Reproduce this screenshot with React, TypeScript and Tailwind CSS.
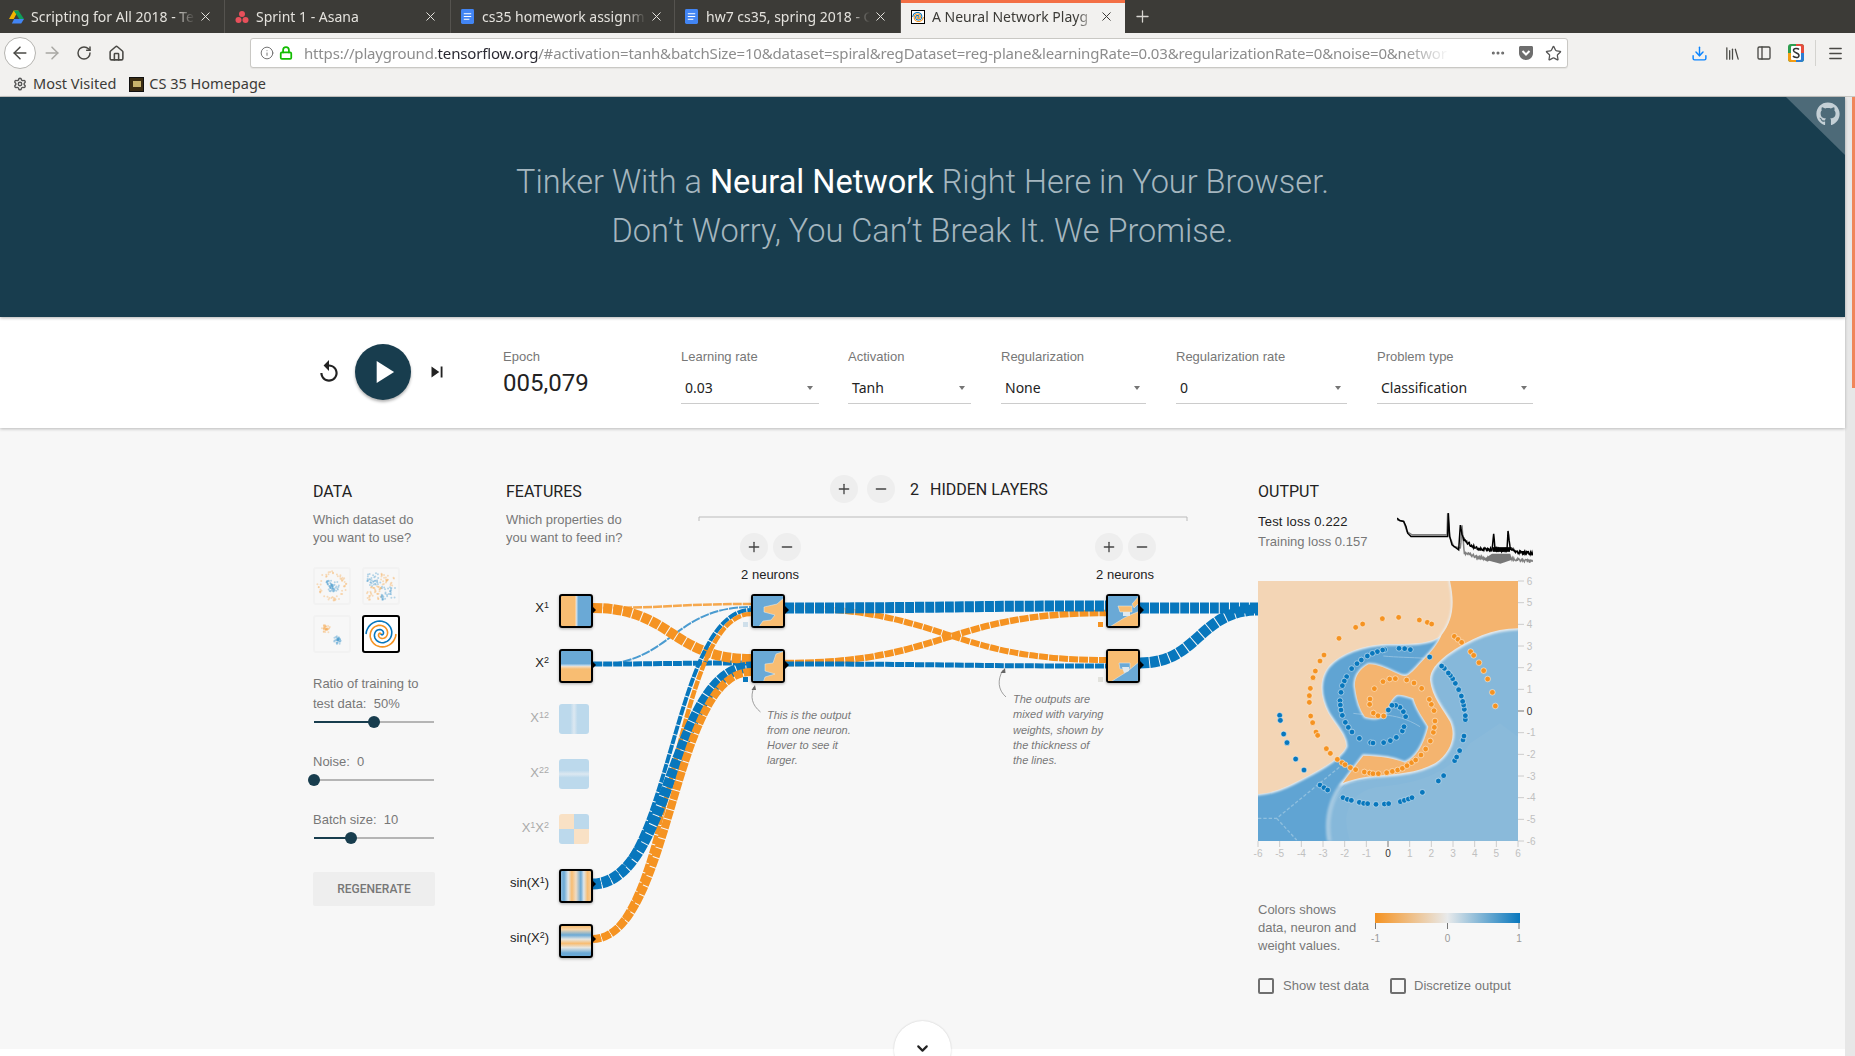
import { ArrowLeft, ArrowRight, ChevronDown, Download, Home, Info, Library, Lock, Menu, Minus, MoreHorizontal, PanelLeft, Plus, RotateCw, Settings, Star, X } from "lucide-react";
import { FaGithub } from "react-icons/fa";
import { MdPlayArrow, MdReplay, MdSkipNext } from "react-icons/md";
import type { ReactNode } from "react";

const BLUE = "#0877bd";
const ORANGE = "#f59322";

// points read off the output plot, in 3x zoom coordinates
const bluePts = [[119,436],[121,451],[131,492],[141,518],[167,567],[192,600],[240,645],[252,653],[263,660],[309,683],[322,688],[334,691],[358,697],[371,700],[383,701],[408,703],[433,702],[446,701],[481,695],[493,691],[505,687],[516,683],[547,667],[595,633],[611,617],[644,572],[650,561],[659,542],[669,510],[672,498],[676,449],[676,437],[673,418],[671,405],[668,394],[664,378],[656,359],[646,340],[638,326],[631,316],[625,309],[613,295],[605,288],[569,261],[511,239],[494,236],[477,235],[434,239],[428,240],[412,245],[397,250],[382,258],[364,270],[351,281],[335,296],[320,320],[313,333],[307,347],[303,367],[300,392],[301,405],[303,420],[307,436],[316,457],[325,472],[336,486],[358,505],[392,518],[399,519],[431,518],[451,512],[469,502],[487,483],[492,470],[497,440],[490,425],[480,412],[467,406],[456,406],[445,420]];
const orangePts = [[427,146],[476,142],[538,150],[562,157],[575,162],[368,162],[347,172],[297,205],[252,255],[240,273],[226,303],[219,323],[211,355],[208,377],[208,397],[212,438],[218,458],[228,486],[233,496],[259,536],[271,550],[292,568],[306,578],[315,584],[331,593],[347,599],[373,606],[389,609],[399,611],[415,611],[440,608],[457,604],[473,600],[487,595],[501,587],[515,578],[527,570],[543,555],[557,537],[571,513],[580,487],[583,472],[585,453],[582,422],[574,403],[568,388],[545,355],[522,339],[500,330],[466,326],[449,327],[429,335],[403,356],[390,387],[389,403],[400,429],[414,437],[431,438],[643,199],[654,208],[665,217],[692,245],[701,256],[717,278],[731,302],[743,327],[757,367],[766,408]];

function seeded(seed: number) {
  let s = seed;
  return () => {
    s = (s * 16807) % 2147483647;
    return s / 2147483647;
  };
}

function Thumb({ kind, active }: { kind: string; active?: boolean }) {
  const r = seeded(kind.length * 977 + 13);
  const dots: { x: number; y: number; c: string }[] = [];
  if (kind === "circle") {
    for (let i = 0; i < 110; i++) {
      const a = r() * 6.28;
      const d = i % 2 ? r() * 7 : 11 + r() * 4;
      dots.push({ x: 17 + Math.cos(a) * d, y: 17 + Math.sin(a) * d, c: i % 2 ? BLUE : ORANGE });
    }
  } else if (kind === "xor") {
    for (let i = 0; i < 130; i++) {
      const x = 3 + r() * 28;
      const y = 3 + r() * 28;
      dots.push({ x, y, c: (x - 17) * (y - 17) > 0 ? BLUE : ORANGE });
    }
  } else {
    for (let i = 0; i < 70; i++) {
      const a = r() * 6.28;
      const d = r() * 4.5;
      const o = i % 2 === 0;
      dots.push({ x: (o ? 11 : 23) + Math.cos(a) * d, y: (o ? 12 : 23) + Math.sin(a) * d, c: o ? ORANGE : BLUE });
    }
  }
  return (
    <div className={active ? "w-[38px] h-[38px] bg-white border-2 border-black rounded-[3px]" : "w-[38px] h-[38px] border-2 border-[#f0f0f0] rounded-[3px] opacity-70"}>
      <svg viewBox="0 0 34 34" className="w-full h-full">
        {kind === "spiral" ? (
          <>
            <path d={spiralPath(0)} fill="none" stroke={BLUE} strokeWidth="1.6" />
            <path d={spiralPath(Math.PI)} fill="none" stroke={ORANGE} strokeWidth="1.6" />
          </>
        ) : (
          dots.map((d, i) => <circle key={i} cx={d.x} cy={d.y} r="1" fill={d.c} opacity="0.4" />)
        )}
      </svg>
    </div>
  );
}

function spiralPath(delta: number) {
  let d = "";
  for (let i = 0; i <= 60; i++) {
    const t = (i / 60) * 1.75 * 2 * Math.PI + delta;
    const rad = (i / 60) * 15;
    d += `${i ? "L" : "M"}${(17 + rad * Math.sin(t)).toFixed(1)} ${(17 + rad * Math.cos(t)).toFixed(1)}`;
  }
  return d;
}

function Tab({ icon, title, width, active }: { icon: ReactNode; title: string; width: string; active?: boolean }) {
  return (
    <div className={`flex items-center pl-[9px] h-[33px] ${width} ${active ? "bg-[#f2f1ef] border-t-[3px] border-[#f36f45] pb-[3px] text-[#3c3b37]" : "border-r border-[#55534f] text-[#e4e2dd]"}`}>
      <div className="w-[15px] h-[15px] shrink-0 flex items-center justify-center">{icon}</div>
      <div className="ml-[7px] w-[164px] overflow-hidden whitespace-nowrap text-[14px] [mask-image:linear-gradient(90deg,#000_88%,transparent)]">{title}</div>
      <X size={15} strokeWidth={1.6} className="ml-[3px] shrink-0" />
    </div>
  );
}

function DocIcon() {
  return (
    <svg viewBox="0 0 14 16" className="w-[13px] h-[15px]">
      <rect width="14" height="16" rx="1.5" fill="#4285f4" />
      <path d="M3 5h8M3 8h8M3 11h6" stroke="#fff" strokeWidth="1.1" />
    </svg>
  );
}

function SelectBox({ label, value, width, gap }: { label: string; value: string; width: string; gap: string }) {
  return (
    <div className={`flex flex-col ${width} ${gap}`}>
      <div className="text-[13px] leading-4 text-[#777]">{label}</div>
      <div className="mt-[1px] h-[38px] border-b border-[#ccc] flex items-end justify-between pl-1 pr-[6px] pb-[6px] text-[14px] leading-[19px] text-[#222] [font-family:'Noto_Sans',sans-serif]">
        <span>{value}</span>
        <span className="mb-[7px] w-0 h-0 border-x-[3.5px] border-x-transparent border-t-[4px] border-t-[#757575]" />
      </div>
    </div>
  );
}

function Slider({ pct, fill }: { pct: string; fill: string }) {
  return (
    <div className="relative h-3 w-[120px] ml-px flex items-center">
      <div className="h-[2px] w-full bg-[#b5b5b5]" />
      <div className={`absolute left-0 h-[2px] bg-[#183d4e] ${fill}`} />
      <div className={`absolute w-3 h-3 rounded-full bg-[#183d4e] -ml-[6px] ${pct}`} />
    </div>
  );
}

function RoundButton({ children, className }: { children: ReactNode; className: string }) {
  return <div className={`absolute w-7 h-7 rounded-full bg-[#eeeeee] flex items-center justify-center text-[#444] ${className}`}>{children}</div>;
}

const features = [
  { key: "x1", top: "top-[166px]", on: true, label: <>X<sup className="text-[9px]">1</sup></>, bg: "bg-[linear-gradient(90deg,#f8bd72_0_46%,#f5dcc0_50%,#c6dcec_52%,#6aa9d6_58%)]" },
  { key: "x2", top: "top-[221px]", on: true, label: <>X<sup className="text-[9px]">2</sup></>, bg: "bg-[linear-gradient(180deg,#6aa9d6_0_42%,#c6dcec_49%,#f5dcc0_52%,#f8bd72_60%)]" },
  { key: "x12", top: "top-[276px]", on: false, label: <>X<sup className="text-[9px]">12</sup></>, bg: "bg-[linear-gradient(90deg,#bcd9ec_0_38%,#dce8f1_50%,#bcd9ec_62%)]" },
  { key: "x22", top: "top-[331px]", on: false, label: <>X<sup className="text-[9px]">22</sup></>, bg: "bg-[linear-gradient(180deg,#bcd9ec_0_38%,#dce8f1_50%,#bcd9ec_62%)]" },
  { key: "x1x2", top: "top-[386px]", on: false, label: <>X<sup className="text-[9px]">1</sup>X<sup className="text-[9px]">2</sup></>, bg: "bg-[conic-gradient(#bcd9ec_0_90deg,#f9e1c5_90deg_180deg,#bcd9ec_180deg_270deg,#f9e1c5_270deg)]" },
  { key: "sin1", top: "top-[441px]", on: true, label: <>sin(X<sup className="text-[9px]">1</sup>)</>, bg: "bg-[linear-gradient(90deg,#8fbbdc_0,#6aa9d6_10%,#dfe6ea_24%,#f8bd72_36%,#f0dcc4_50%,#6aa9d6_66%,#dfe6ea_76%,#f8bd72_88%,#f6cd98_100%)]" },
  { key: "sin2", top: "top-[496px]", on: true, label: <>sin(X<sup className="text-[9px]">2</sup>)</>, bg: "bg-[linear-gradient(180deg,#f8bd72_0,#f6d6ac_12%,#6aa9d6_30%,#e6e6e2_44%,#f8bd72_58%,#e6e6e2_72%,#6aa9d6_90%,#6aa9d6_100%)]" },
];

function Neuron({ pos, bg, blue, orange, glow }: { pos: string; bg: string; blue?: string; orange?: string; glow?: string }) {
  return (
    <div className={`absolute w-[34px] h-[34px] border-2 border-black rounded-[3px] overflow-hidden shadow-[0_1px_3px_rgba(0,0,0,.3)] ${pos}`}>
      <svg viewBox="0 0 34 34" className="block w-full h-full -m-[2px] min-w-[34px] min-h-[34px]">
        <rect width="34" height="34" fill={bg} />
        {blue && <path d={blue} fill="#6aa9d6" stroke="#dbe7ef" strokeWidth="0.6" />}
        {orange && <path d={orange} fill="#f8bd72" stroke="#eef0ee" strokeWidth="0.5" />}
        {glow && <path d={glow} fill="#dfe9f0" />}
      </svg>
    </div>
  );
}

function Link({ d, w, c, o }: { d: string; w: number; c: string; o?: number }) {
  return <path d={d} fill="none" stroke={c} strokeWidth={w} strokeDasharray="9 1" opacity={o ?? 1} />;
}

function Curve(x1: number, y1: number, x2: number, y2: number) {
  const m = (x1 + x2) / 2;
  return `M${x1} ${y1}C${m} ${y1} ${m} ${y2} ${x2} ${y2}`;
}

function Network() {
  return (
    <svg viewBox="507 428 751 621" className="absolute inset-0 w-[751px] h-[621px] pointer-events-none">
      <path d="M699 521V517H1187V521" fill="none" stroke="#bbb" strokeWidth="1" />
      <Link d={Curve(593, 608, 751, 604)} w={2.5} c={ORANGE} o={0.8} />
      <Link d={Curve(593, 665, 751, 607)} w={2} c="#4a9bd0" />
      <Link d={Curve(593, 664, 751, 663)} w={5} c={BLUE} />
      <Link d={Curve(593, 608, 751, 659)} w={10} c={ORANGE} />
      <Link d={Curve(592, 884, 751, 610)} w={4} c={BLUE} />
      <Link d={Curve(592, 939, 751, 614)} w={4.5} c={ORANGE} />
      <Link d={Curve(592, 884, 751, 667)} w={11} c={BLUE} />
      <Link d={Curve(592, 939, 751, 672)} w={8} c={ORANGE} />
      <Link d={Curve(785, 608, 1106, 660)} w={6} c={ORANGE} />
      <Link d={Curve(785, 663, 1106, 613)} w={6.5} c={ORANGE} />
      <Link d={Curve(785, 664, 1106, 666)} w={5} c={BLUE} />
      <Link d={Curve(785, 608, 1106, 606)} w={11} c={BLUE} />
      <Link d={Curve(1140, 608, 1258, 608)} w={11} c={BLUE} />
      <Link d={Curve(1140, 663, 1258, 610)} w={11} c={BLUE} />
      {[[593, 610], [593, 665], [593, 884], [593, 939], [786, 610], [786, 665], [1141, 610], [1141, 665]].map(([x, y]) => (
        <path key={`${x}-${y}`} d={`M${x - 1} ${y - 4}L${x + 3} ${y}L${x - 1} ${y + 4}Z`} fill="#000" />
      ))}
      <rect x="743" y="622" width="5" height="5" fill="#cfdfea" />
      <rect x="743" y="677" width="5" height="5" fill={BLUE} />
      <rect x="1098" y="622" width="5" height="5" fill={ORANGE} />
      <rect x="1098" y="677" width="5" height="5" fill="#e2e2dd" />
      <path d="M760.5 712C752 705 750 697 754 687" fill="none" stroke="#888" strokeWidth="0.8" />
      <path d="M751.5 690L755 685L756 690Z" fill="#666" />
      <path d="M1006 697C998 690 997 680 1003 670" fill="none" stroke="#888" strokeWidth="0.8" />
      <path d="M1000.5 673L1005 668L1005.5 673Z" fill="#666" />
    </svg>
  );
}

function lossLine(points: number[][], amp: number, from: number) {
  const r = seeded(amp * 1000 + 7);
  let d = "";
  for (let i = 0; i < points.length - 1; i++) {
    const [x1, y1] = points[i];
    const [x2, y2] = points[i + 1];
    const steps = x1 >= from ? Math.max(1, Math.floor((x2 - x1) / 1.5)) : 1;
    for (let s = 0; s < steps; s++) {
      const t = s / steps;
      const n = x1 >= from ? (r() - 0.5) * amp : 0;
      d += `${d ? "L" : "M"}${(x1 + (x2 - x1) * t).toFixed(1)} ${(y1 + (y2 - y1) * t + n).toFixed(1)}`;
    }
  }
  return d + `L${points[points.length - 1].join(" ")}`;
}

function LossChart() {
  const test = [[470,145],[478,152],[490,155],[497,170],[502,190],[512,200],[622,200],[624,130],[628,200],[635,225],[655,240],[660,170],[668,205],[690,225],[720,238],[755,240],[760,195],[765,240],[800,240],[803,185],[810,235],[830,248],[878,250]];
  const train = [[470,150],[490,155],[500,185],[515,195],[620,195],[622,130],[628,200],[640,230],[660,238],[665,170],[672,250],[690,255],[720,265],[750,270],[810,265],[840,272],[878,275]];
  return (
    <svg viewBox="470 130 408 155" className="w-[136px] h-[52px] shrink-0">
      <path d={lossLine(train, 9, 660)} fill="none" stroke="#808080" strokeWidth="4.5" />
      <path d="M730 268L755 252H810L815 270L780 282Z" fill="#777" />
      <path d={lossLine(test, 10, 660)} fill="none" stroke="#000" strokeWidth="4.5" />
      <rect x="757" y="232" width="52" height="14" fill="#000" />
    </svg>
  );
}

function Heatmap() {
  const ticks = [-6, -5, -4, -3, -2, -1, 0, 1, 2, 3, 4, 5, 6];
  const lightEdge = "M54 33H630C645 100 640 150 605 195C570 225 500 222 440 222C370 225 300 250 265 290C235 330 240 380 265 430C290 470 320 500 318 530C300 570 220 610 160 640C110 665 80 670 54 672Z";
  const orangeEdge = "M630 33H834V175C760 175 690 205 620 255C590 280 570 300 570 330C575 380 610 420 630 455C650 500 630 550 585 580C530 610 470 612 400 618C360 622 330 630 308 640C325 615 345 590 370 557C420 558 465 565 495 578C525 565 550 530 565 470C550 445 530 420 520 385C500 378 480 372 470 375C455 385 450 400 445 410C440 430 430 442 410 444C395 446 385 442 375 440C360 420 350 390 345 350C343 325 355 300 385 283C405 280 440 295 470 310C485 318 495 320 505 315C525 300 535 285 550 270C575 245 595 220 605 195C640 150 645 100 630 33Z";
  return (
    <svg width="260" height="260" viewBox="54 33 780 780" className="block overflow-visible shrink-0">
      <defs>
        <clipPath id="plot"><rect x="54" y="33" width="780" height="780" /></clipPath>
        <filter id="soft" x="-5%" y="-5%" width="110%" height="110%"><feGaussianBlur stdDeviation="2.5" /></filter>
      </defs>
      <g clipPath="url(#plot)">
        <rect x="54" y="33" width="780" height="780" fill="#86b8da" />
        <path d="M330 813C300 730 330 660 420 650C520 640 620 620 690 520L780 460L834 500V813Z" fill="#8abada" />
        <path d="M54 33H640V175L600 265L570 320L590 390L640 470L630 530L580 580L500 610L400 625L320 640C270 690 258 750 268 813H54Z" fill="#60a4d3" />
        <path d="M834 175C760 175 690 205 620 255C590 280 570 300 570 330C575 380 610 420 630 455C650 500 630 550 585 580C530 610 470 612 400 618C360 622 330 630 308 640C270 690 258 750 268 813" fill="none" stroke="#a4c9e2" strokeWidth="14" filter="url(#soft)" />
        <path d="M54 745H110L300 590M110 745L170 810" fill="none" stroke="#8fbfde" strokeWidth="4" strokeDasharray="10 6" />
        <path d="M340 430C400 440 460 420 540 470" fill="none" stroke="#8fbfe0" strokeWidth="3" />
        <path d="M430 258C470 262 510 262 560 265" fill="none" stroke="#8fbfe0" strokeWidth="3" />
        <path d={lightEdge} fill="#f3d5b5" stroke="#eef1f2" strokeWidth="9" filter="url(#soft)" />
        <path d={lightEdge} fill="#f3d5b5" />
        <path d={orangeEdge} fill="#f4b46f" stroke="#e9eff3" strokeWidth="8" filter="url(#soft)" />
        <path d={orangeEdge} fill="#f4b46f" />
        {bluePts.map(([x, y], i) => <circle key={i} cx={x} cy={y} r="8.5" fill={BLUE} stroke="#fff" strokeOpacity="0.75" strokeWidth="2" />)}
        {orangePts.map(([x, y], i) => <circle key={i} cx={x} cy={y} r="8.5" fill={ORANGE} stroke="#fff" strokeOpacity="0.75" strokeWidth="2" />)}
      </g>
      {ticks.map((t) => {
        const x = 54 + (t + 6) * 65;
        const y = 813 - (t + 6) * 65;
        const c = t === 0 ? "#333" : "#c0c0c0";
        return (
          <g key={t} fontSize="30" fill={c}>
            <path d={`M834 ${y}H852M${x} 813V831`} stroke={t === 0 ? "#777" : "#ccc"} strokeWidth="3" fill="none" />
            <text x="860" y={y + 11}>{t}</text>
            <text x={x} y="860" textAnchor="middle">{t}</text>
          </g>
        );
      })}
    </svg>
  );
}

function Legend() {
  return (
    <svg width="150" height="44" className="block overflow-visible shrink-0">
      <defs>
        <linearGradient id="scale">
          <stop offset="0" stopColor={ORANGE} />
          <stop offset="0.5" stopColor="#e8eaeb" />
          <stop offset="1" stopColor={BLUE} />
        </linearGradient>
      </defs>
      <rect x="0" y="12" width="145" height="10" fill="url(#scale)" />
      {[0.5, 72.5, 144].map((x, i) => (
        <g key={x} fill="#999" fontSize="10">
          <path d={`M${x} 22V28`} stroke="#777" />
          <text x={x} y="41" textAnchor="middle">{[-1, 0, 1][i]}</text>
        </g>
      ))}
    </svg>
  );
}

export default function App() {
  return (
    <div className="h-screen w-full overflow-hidden flex flex-col bg-white [font-family:'Liberation_Sans',Arial,sans-serif]">
      <div className="h-[33px] bg-[#3c3b37] flex shrink-0 [font-family:'Noto_Sans',sans-serif]">
        <Tab width="w-[225px]" title="Scripting for All 2018 - Te" icon={
          <svg viewBox="0 0 16 14" className="w-[15px] h-[14px]"><path d="M5 0h5L5 9H0z" fill="#f4b400" /><path d="M10 0l6 9h-5L5 0z" fill="#0f9d58" /><path d="M3 14l2.500-5H16l-3 5z" fill="#4285f4" /></svg>
        } />
        <Tab width="w-[226px]" title="Sprint 1 - Asana" icon={
          <svg viewBox="0 0 14 14" className="w-[14px] h-[14px]"><circle cx="7" cy="4" r="3" fill="#e8505b" /><circle cx="3.500" cy="10" r="3" fill="#e8505b" /><circle cx="10.500" cy="10" r="3" fill="#e8505b" /></svg>
        } />
        <Tab width="w-[224px]" title="cs35 homework assignm" icon={<DocIcon />} />
        <Tab width="w-[226px]" title="hw7 cs35, spring 2018 - G" icon={<DocIcon />} />
        <Tab width="w-[224px]" active title="A Neural Network Playg" icon={
          <div className="w-[14px] h-[14px] border border-black bg-white flex items-center justify-center"><svg viewBox="0 0 34 34" className="w-3 h-3"><path d={spiralPath(0)} fill="none" stroke={BLUE} strokeWidth="3" /><path d={spiralPath(Math.PI)} fill="none" stroke={ORANGE} strokeWidth="3" /></svg></div>
        } />
        <div className="w-[34px] flex items-center justify-center text-[#d8d6d1]"><Plus size={19} strokeWidth={1.6} /></div>
      </div>

      <div className="h-[39px] shrink-0 bg-[#f2f1ef] flex items-center pl-1 pt-[1px] text-[#4a4945]">
        <div className="w-8 h-8 rounded-full border border-[#b5b4b0] bg-white flex items-center justify-center"><ArrowLeft size={20} strokeWidth={1.8} /></div>
        <div className="w-8 h-8 flex items-center justify-center text-[#a8a7a3]"><ArrowRight size={20} strokeWidth={1.8} /></div>
        <div className="w-8 h-8 flex items-center justify-center"><RotateCw size={16} strokeWidth={2.2} /></div>
        <div className="w-8 h-8 flex items-center justify-center"><Home size={17} strokeWidth={2.2} /></div>
        <div className="ml-[118px] w-[1318px] h-[30px] bg-white border border-[#c9c8c4] rounded-[3px] flex items-center pl-[9px] pr-[5px] shadow-[0_1px_1px_rgba(0,0,0,.06)]">
          <Info size={14} strokeWidth={1.6} className="text-[#6a6a6a] shrink-0" />
          <Lock size={14} strokeWidth={3} className="ml-[5px] text-[#12bc00] shrink-0" />
          <div className="ml-[11px] w-[1146px] overflow-hidden whitespace-nowrap text-[15px] tracking-[-0.17px] text-[#8d8d8d] [font-family:'Noto_Sans',sans-serif] [mask-image:linear-gradient(90deg,#000_96%,transparent)]">
            https://playground.<span className="text-[#2b2a33]">tensorflow.org</span>/#activation=tanh&amp;batchSize=10&amp;dataset=spiral&amp;regDataset=reg-plane&amp;learningRate=0.03&amp;regularizationRate=0&amp;noise=0&amp;networ
          </div>
          <MoreHorizontal size={16} strokeWidth={2.6} className="ml-auto text-[#6a6a6a] shrink-0" />
          <svg viewBox="0 0 16 16" className="ml-[12px] w-4 h-4 shrink-0"><path d="M1 2.500C1 1.500 1.800 1 2.500 1h11c.8 0 1.500.5 1.500 1.500V8c0 4-3 7-7 7s-7-3-7-7z" fill="#6e6e6e" /><path d="M4.500 6L8 9.500 11.500 6" fill="none" stroke="#fff" strokeWidth="2" /></svg>
          <Star size={17} strokeWidth={1.8} className="ml-[11px] text-[#555] shrink-0" />
        </div>
        <div className="ml-[115px] w-8 h-8 flex items-center justify-center text-[#0a84ff]"><Download size={17} strokeWidth={2} /></div>
        <div className="ml-px w-8 h-8 flex items-center justify-center"><Library size={17} strokeWidth={1.8} /></div>
        <div className="w-8 h-8 flex items-center justify-center"><PanelLeft size={16} strokeWidth={2} /></div>
        <div className="w-8 h-8 flex items-center justify-center">
          <svg viewBox="0 0 16 18" className="w-4 h-[18px]"><rect width="16" height="18" rx="3" fill="#2e9e4f" /><path d="M0 9h8v9H3a3 3 0 0 1-3-3z" fill="#f39c12" /><path d="M8 0h5a3 3 0 0 1 3 3v6H8z" fill="#e74c3c" /><path d="M8 9h8v6a3 3 0 0 1-3 3H8z" fill="#2d7dd2" /><rect x="3" y="2" width="10" height="14" rx="1" fill="#fff" /><path d="M11 5.500C10 4.300 5.500 4 5.500 6.500S11 8.500 11 11.500 6 13.500 5 12" fill="none" stroke="#333" strokeWidth="1.500" /></svg>
        </div>
        <div className="ml-[3px] w-px h-[26px] bg-[#d4d3cf]" />
        <div className="w-8 ml-[3px] h-8 flex items-center justify-center"><Menu size={17} strokeWidth={2} /></div>
      </div>

      <div className="h-[25px] shrink-0 bg-[#f2f1ef] border-b border-[#c8c7c3] flex items-center pl-[13px] text-[14.500px] text-[#3c3b37] [font-family:'Noto_Sans',sans-serif]">
        <Settings size={14} strokeWidth={2.4} className="text-[#555]" />
        <span className="ml-[6px]">Most Visited</span>
        <div className="ml-[13px] w-[15px] h-[15px] bg-[#3b2c12] border border-[#111] flex items-center justify-center"><div className="w-2 h-[6px] bg-[#c9b36b]" /></div>
        <span className="ml-[5px]">CS 35 Homepage</span>
      </div>

      <div className="flex-1 min-h-0 flex">
        <div className="flex-1 min-w-0 flex flex-col">
          <div className="relative h-[220px] shrink-0 bg-[#183d4e] flex flex-col items-center justify-center text-[32.500px] leading-[49px] font-light text-[#a5b6bf] [font-family:Roboto,sans-serif] shadow-[0_1px_3px_rgba(0,0,0,.3)] z-20">
            <div>Tinker With a <span className="font-normal text-white">Neural Network</span> Right Here in Your Browser.</div>
            <div>Don’t Worry, You Can’t Break It. We Promise.</div>
            <div className="absolute top-0 right-0 w-[59px] h-[58px] bg-[#4d6a78] [clip-path:polygon(0_0,100%_0,100%_100%)]" />
            <FaGithub size={24} className="absolute top-[5px] right-[5px] text-[#c5d0d6]" />
          </div>

          <div className="relative z-10 h-[111px] shrink-0 bg-white flex pl-[317px] shadow-[0_1px_3px_rgba(0,0,0,.25)]">
            <div className="flex items-center h-[110px] -ml-px">
              <MdReplay size={26} className="text-[#222]" />
              <div className="ml-[13px] w-[56px] h-[56px] rounded-full bg-[#183d4e] flex items-center justify-center shadow-[0_2px_3px_rgba(0,0,0,.3)]"><MdPlayArrow size={38} className="text-white" /></div>
              <MdSkipNext size={22} className="ml-[15px] text-[#222]" />
            </div>
            <div className="ml-[55px] w-[178px] pt-[32px]">
              <div className="text-[13px] leading-4 text-[#777]">Epoch</div>
              <div className="mt-[3px] text-[24px] leading-[30px] text-[#222] [font-family:Roboto,sans-serif]">005,079</div>
            </div>
            <div className="flex pt-[32px]">
              <SelectBox label="Learning rate" value="0.03" width="w-[138px]" gap="" />
              <SelectBox label="Activation" value="Tanh" width="w-[123px]" gap="ml-[29px]" />
              <SelectBox label="Regularization" value="None" width="w-[145px]" gap="ml-[30px]" />
              <SelectBox label="Regularization rate" value="0" width="w-[171px]" gap="ml-[30px]" />
              <SelectBox label="Problem type" value="Classification" width="w-[156px]" gap="ml-[30px]" />
            </div>
          </div>

          <div className="relative h-[621px] shrink-0 bg-[#f7f7f7] flex pl-[313px] pt-[54px]">
            <div className="w-[194px] text-[13px] text-[#777]">
              <div className="h-5 leading-5 text-[16px] text-[#222] [font-family:Roboto,sans-serif]">DATA</div>
              <div className="mt-[9px] leading-[18px]">Which dataset do<br />you want to use?</div>
              <div className="mt-5 grid grid-cols-[38px_38px] gap-x-[11px] gap-y-[10px]">
                <Thumb kind="circle" />
                <Thumb kind="xor" />
                <Thumb kind="gauss" />
                <Thumb kind="spiral" active />
              </div>
              <div className="mt-[21px] leading-5">Ratio of training to<br />test data:&nbsp; 50%</div>
              <div className="mt-[2px]"><Slider pct="left-1/2" fill="w-1/2" /></div>
              <div className="mt-6 leading-5">Noise:&nbsp; 0</div>
              <div className="mt-[2px]"><Slider pct="left-0" fill="w-0" /></div>
              <div className="mt-6 leading-5">Batch size:&nbsp; 10</div>
              <div className="mt-[2px]"><Slider pct="left-[31%]" fill="w-[31%]" /></div>
              <div className="mt-[28px] w-[122px] h-[34px] rounded-[2px] bg-[#eeeeee] flex items-center justify-center text-[12px] font-medium text-[#777] [font-family:Roboto,sans-serif]">REGENERATE</div>
            </div>

            <div className="relative w-[751px] h-[621px] -mt-[54px] text-[13px] text-[#777]">
              <Network />
              <div className="absolute left-[-1px] top-[54px] h-5 leading-5 text-[16px] text-[#222] [font-family:Roboto,sans-serif]">FEATURES</div>
              <div className="absolute left-[-1px] top-[83px] leading-[18px]">Which properties do<br />you want to feed in?</div>

              {features.map((f) => (
                <div key={f.key} className={`absolute left-[-18px] flex items-start ${f.top}`}>
                  <div className={`w-[60px] h-[28px] leading-[28px] text-right text-[13px] ${f.on ? "text-[#222]" : "text-[#aaa]"}`}>{f.label}</div>
                  <div className={f.on ? `ml-[10px] w-[34px] h-[34px] border-2 border-black rounded-[3px] shadow-[0_1px_3px_rgba(0,0,0,.3)] ${f.bg}` : `ml-[10px] w-[30px] h-[30px] rounded-[3px] ${f.bg}`} />
                </div>
              ))}

              <RoundButton className="left-[323px] top-[47px]"><Plus size={16} /></RoundButton>
              <RoundButton className="left-[360px] top-[47px]"><Minus size={16} /></RoundButton>
              <div className="absolute left-[403px] top-[52px] h-5 leading-5 text-[16px] text-[#222] [font-family:Roboto,sans-serif] whitespace-nowrap">2<span className="ml-[11px]">HIDDEN LAYERS</span></div>

              <RoundButton className="left-[233px] top-[105px]"><Plus size={16} /></RoundButton>
              <RoundButton className="left-[266px] top-[105px]"><Minus size={16} /></RoundButton>
              <div className="absolute left-[213px] w-[100px] text-center top-[139px] leading-4 text-[13px] text-[#222]">2 neurons</div>
              <RoundButton className="left-[588px] top-[105px]"><Plus size={16} /></RoundButton>
              <RoundButton className="left-[621px] top-[105px]"><Minus size={16} /></RoundButton>
              <div className="absolute left-[568px] w-[100px] text-center top-[139px] leading-4 text-[13px] text-[#222]">2 neurons</div>

              <Neuron pos="left-[244px] top-[166px]" bg="#6aa9d6" orange="M7 34L12 27L20 26L24 21L13 18L13 13L26 10L34 3V34Z" />
              <Neuron pos="left-[244px] top-[221px]" bg="#6aa9d6" orange="M12 34L14 28L24 25L14 22L14 15L22 14L25 5L34 2V34Z" />
              <Neuron pos="left-[599px] top-[166px]" bg="#6aa9d6" orange="M2 34L18 24L24 21L34 17V34ZM12 12H26V18H14ZM26 10L34 1V8L28 14Z" glow="M17 18h7v4h-7z" />
              <Neuron pos="left-[599px] top-[221px]" bg="#f8bd72" blue="M3 34L14 27L22 22L34 12V34ZM13 14H24V20H14Z" glow="M16 18H23V22L18 24Z" />

              <div className="absolute left-[260px] top-[280px] text-[11px] leading-[15px] italic whitespace-nowrap">This is the output<br />from one neuron.<br />Hover to see it<br />larger.</div>
              <div className="absolute left-[506px] top-[264px] text-[11px] leading-[15.300px] italic whitespace-nowrap">The outputs are<br />mixed with varying<br />weights, shown by<br />the thickness of<br />the lines.</div>
            </div>

            <div className="w-[275px]">
              <div className="h-5 leading-5 text-[16px] text-[#222] [font-family:Roboto,sans-serif]">OUTPUT</div>
              <div className="mt-[11px] flex items-start">
                <div className="w-[139px] text-[13px] leading-[18px] shrink-0">
                  <div className="text-[#222] tracking-[0.2px]">Test loss 0.222</div>
                  <div className="mt-[2px] text-[#777]">Training loss 0.157</div>
                </div>
                <LossChart />
              </div>
              <div className="mt-4"><Heatmap /></div>
              <div className="mt-[60px] flex">
                <div className="w-[117px] shrink-0 text-[13px] leading-[18px] text-[#777]">Colors shows<br />data, neuron and<br />weight values.</div>
                <Legend />
              </div>
              <div className="mt-[21px] flex items-center text-[13px] text-[#777]">
                <div className="w-4 h-4 border-2 border-[#6f6f6f] rounded-[2px]" />
                <span className="ml-[9px]">Show test data</span>
                <div className="ml-[21px] w-4 h-4 border-2 border-[#6f6f6f] rounded-[2px]" />
                <span className="ml-2">Discretize output</span>
              </div>
            </div>

            <div className="absolute left-[894px] top-[593px] w-[57px] h-[57px] rounded-full bg-white shadow-[0_0_2px_rgba(0,0,0,.2)] flex items-start justify-center pt-[19px]"><ChevronDown size={17} strokeWidth={3} className="text-[#222]" /></div>
          </div>
          <div className="flex-1 bg-white" />
        </div>
        <div className="w-[10px] shrink-0 bg-[#e7e7e7] flex justify-end">
          <div className="w-[3px] h-[291px] bg-[#f0865a]" />
        </div>
      </div>
    </div>
  );
}
